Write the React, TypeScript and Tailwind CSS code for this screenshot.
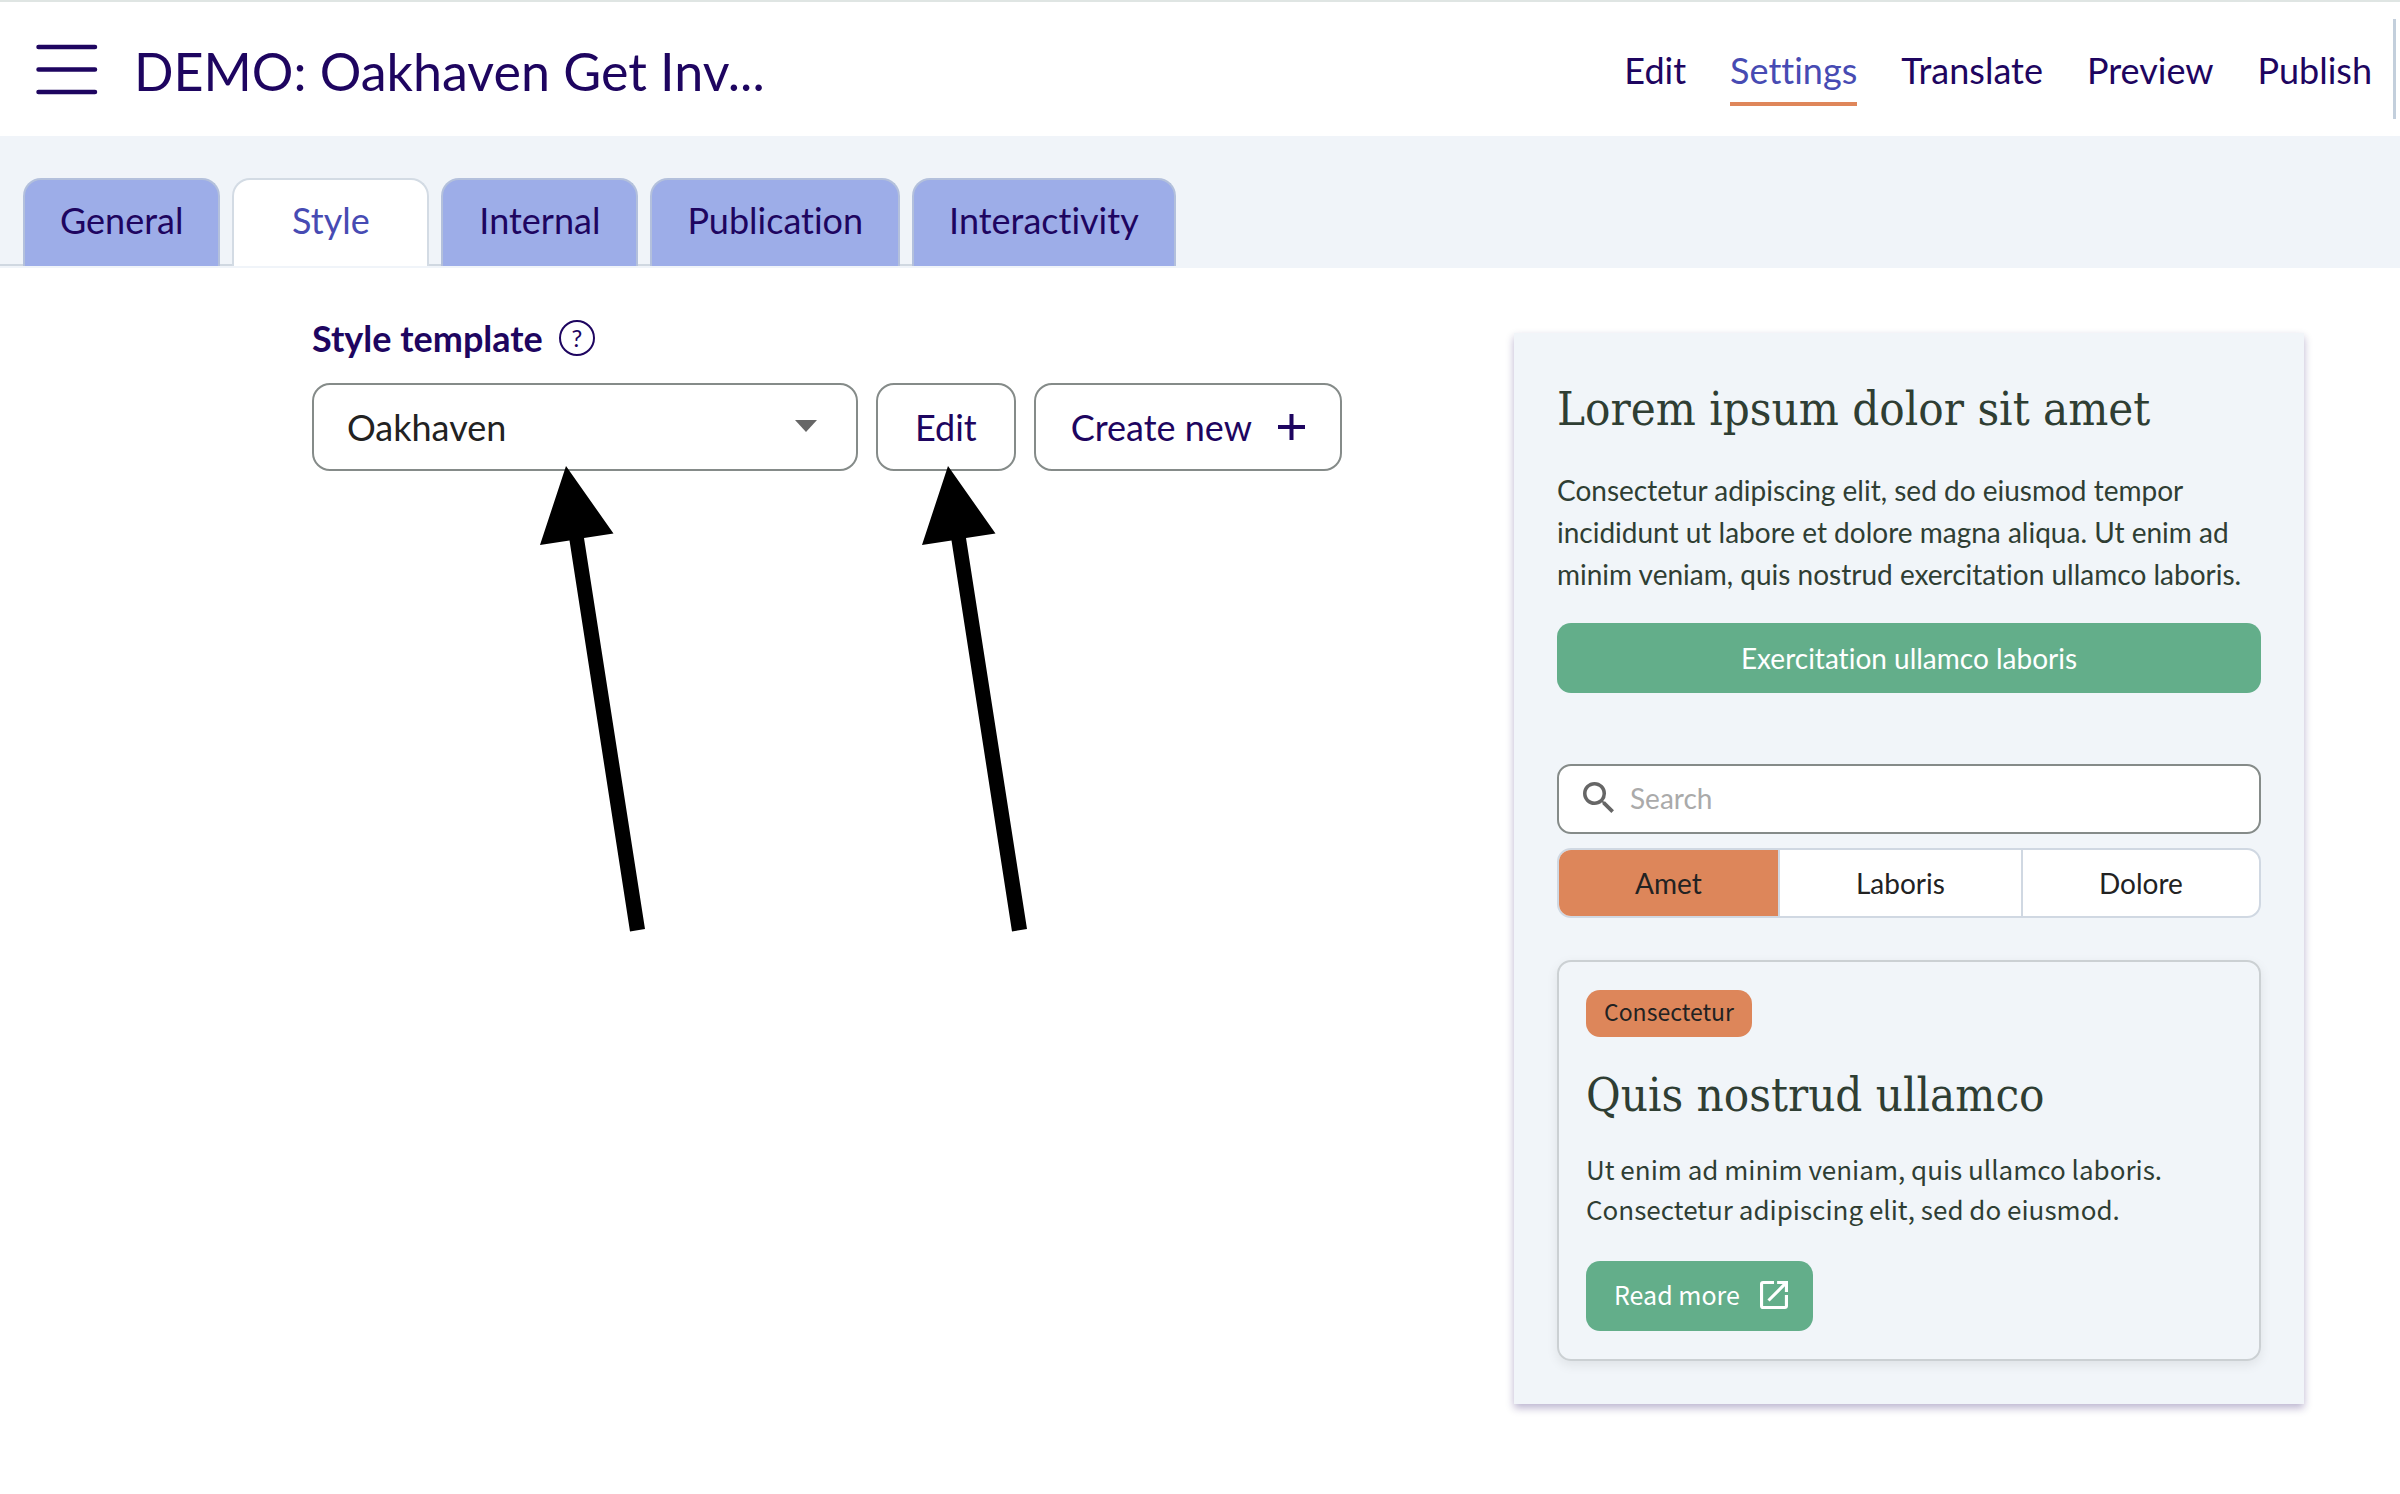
import React from "react";

const navItems = ["Edit", "Settings", "Translate", "Preview", "Publish"];
const tabs = ["General", "Style", "Internal", "Publication", "Interactivity"];

function PointerArrow() {
  return (
    <svg
      className="pointer-events-none absolute top-full left-1/2 -mt-[5px] -ml-6 h-[466px] w-[106px]"
      viewBox="0 0 106 466"
      aria-hidden="true"
    >
      <path d="M26 0 L73.5 67.5 L44 72 L105 463 L90 465.5 L29.5 74.5 L0 79 Z" fill="#000" />
    </svg>
  );
}

function Header() {
  return (
    <header className="flex h-[136px] items-center border-t-2 border-[#dfe5e3] bg-white pl-9">
      <button type="button" aria-label="Menu" className="shrink-0">
        <svg className="h-[52px] w-[62px]" viewBox="0 0 62 52" stroke="#1e0560" strokeWidth="4.5" strokeLinecap="round">
          <path d="M2.5 4H59M2.5 26.5H59M2.5 49H59" />
        </svg>
      </button>
      <h1 className="ml-9 grow truncate pt-1 text-[52px] leading-[72px]">DEMO: Oakhaven Get Inv...</h1>
      <nav className="mr-1 flex h-[100px] items-center gap-11 border-r-[3px] border-[#c3cfdc] pr-[21px]">
        {navItems.map((item) => (
          <a
            key={item}
            href="#"
            aria-current={item === "Settings" ? "page" : undefined}
            className={
              item === "Settings"
                ? "mt-1 border-b-4 border-[#df865a] pt-2 pb-1.5 leading-[52px] text-[#474bb3]"
                : "mt-1 border-b-4 border-transparent pt-2 pb-1.5 leading-[52px]"
            }
          >
            {item}
          </a>
        ))}
      </nav>
    </header>
  );
}

function Tabs() {
  return (
    <div className="flex bg-[#f0f4f9] pt-[42px] pb-[2px]">
      <div role="tablist" className="flex gap-3 bg-[linear-gradient(to_top,#d0d8e1_2px,transparent_2px)] pl-[23px]">
        {tabs.map((tab) => (
          <button
            key={tab}
            type="button"
            role="tab"
            aria-selected={tab === "Style"}
            className={
              tab === "Style"
                ? "h-[88px] min-w-[197px] rounded-t-[18px] border-2 border-b-0 border-[#d3dbe4] bg-white px-[35px] pb-1.5 text-[#474bb3]"
                : "h-[88px] min-w-[197px] rounded-t-[18px] border-2 border-b-0 border-[#b3c0dc] bg-[#9dade8] px-[35px] pb-1.5"
            }
          >
            {tab}
          </button>
        ))}
      </div>
    </div>
  );
}

function TemplatePicker() {
  return (
    <section>
      <div className="flex items-center gap-4">
        <label htmlFor="template" className="leading-[52px] font-bold">
          Style template
        </label>
        <button
          type="button"
          aria-label="Help"
          className="flex size-9 items-center justify-center rounded-full border-[2px] border-[#1e0560] text-[24px] leading-none"
        >
          ?
        </button>
      </div>
      <div className="mt-[19px] flex gap-[18px]">
        <div className="relative w-[546px]">
          <select
            id="template"
            defaultValue="Oakhaven"
            className="h-[88px] w-full appearance-none rounded-[18px] border-2 border-[#858b89] bg-white px-[33px] text-[#222]"
          >
            <option>Oakhaven</option>
          </select>
          <svg className="pointer-events-none absolute top-[37px] right-[41px] h-[12px] w-[22px]" viewBox="0 0 22 12" aria-hidden="true">
            <path d="M0 0H22L11 12Z" fill="#666" />
          </svg>
          <svg
            className="pointer-events-none absolute top-full left-[228px] -mt-[5px] h-[466px] w-[106px]"
            viewBox="0 0 106 466"
            aria-hidden="true"
          >
            <path d="M26 0 L73.5 67.5 L44 72 L105 463 L90 465.5 L29.5 74.5 L0 79 Z" fill="#000" />
          </svg>
        </div>
        <div className="relative">
          <button type="button" className="h-[88px] rounded-[18px] border-2 border-[#858b89] bg-white px-[37px]">
            Edit
          </button>
          <PointerArrow />
        </div>
        <button
          type="button"
          className="flex h-[88px] items-center gap-[26px] rounded-[18px] border-2 border-[#858b89] bg-white px-[35px]"
        >
          Create new
          <svg className="h-[27px] w-[27px]" viewBox="0 0 27 27" stroke="#1e0560" strokeWidth="4" aria-hidden="true">
            <path d="M0 13H27M13.5 0V26" />
          </svg>
        </button>
      </div>
    </section>
  );
}

function Preview() {
  return (
    <section className="mt-[65px] w-[790px] bg-[#f1f5f9] px-[43px] pt-[46px] pb-[43px] text-[28px] text-[#2f3e33] shadow-[0_4px_8px_rgba(30,5,96,0.3)]">
      <h2 className="font-['DejaVu_Serif_Condensed','DejaVu_Serif',serif] text-[47px] leading-[60px]">
        Lorem ipsum dolor sit amet
      </h2>
      <p className="mt-[30px] leading-[42px]">
        Consectetur adipiscing elit, sed do eiusmod tempor incididunt ut labore et dolore magna aliqua. Ut enim ad minim
        veniam, quis nostrud exercitation ullamco laboris.
      </p>
      <button type="button" className="mt-7 h-[70px] w-full rounded-[14px] bg-[#63ae8a] text-white">
        Exercitation ullamco laboris
      </button>
      <div className="mt-[71px] flex h-[70px] items-center rounded-[14px] border-2 border-[#858b89] bg-white pl-6">
        <svg className="-mt-1 h-[31px] w-[31px] shrink-0" viewBox="3 3 17.5 17.5" fill="#666" aria-hidden="true">
          <path d="M15.5 14h-.79l-.28-.27A6.471 6.471 0 0 0 16 9.5 6.5 6.5 0 1 0 9.5 16c1.61 0 3.09-.59 4.23-1.57l.27.28v.79l5 4.99L20.49 19l-4.99-5zm-6 0C7.01 14 5 11.99 5 9.5S7.01 5 9.5 5 14 7.01 14 9.5 11.99 14 9.5 14z" />
        </svg>
        <input
          type="search"
          aria-label="Search"
          placeholder="Search"
          className="ml-4 h-full min-w-0 grow bg-transparent pb-0.5 outline-none placeholder:text-[#aaa]"
        />
      </div>
      <div className="mt-[14px] flex h-[70px] overflow-hidden rounded-[14px] border-2 border-[#d0d8e2] bg-white text-[#222]">
        <button type="button" aria-pressed="true" className="grow bg-[#dd865a] px-4">
          Amet
        </button>
        <button type="button" aria-pressed="false" className="grow border-x-2 border-[#d0d8e2] px-4">
          Laboris
        </button>
        <button type="button" aria-pressed="false" className="grow px-4">
          Dolore
        </button>
      </div>
      <article className="mt-[42px] rounded-[14px] border-2 border-[#cbd0d3] px-[27px] py-7 font-['Noto_Sans_CJK_SC',sans-serif] text-[26px] shadow-[0_4px_12px_rgba(0,0,0,0.08)]">
        <span className="flex h-[47px] w-fit items-center rounded-[14px] bg-[#dd865a] px-[18px] pb-1 text-[23px] text-[#222]">
          Consectetur
        </span>
        <h3 className="mt-7 font-['DejaVu_Serif_Condensed','DejaVu_Serif',serif] text-[47px] leading-[60px]">
          Quis nostrud ullamco
        </h3>
        <p className="mt-6 leading-10">
          Ut enim ad minim veniam, quis ullamco laboris.
          <br />
          Consectetur adipiscing elit, sed do eiusmod.
        </p>
        <button
          type="button"
          className="mt-8 flex h-[70px] items-center gap-5 rounded-[14px] bg-[#63ae8a] pr-[25px] pb-0.5 pl-[28px] text-[25px] text-white"
        >
          Read more
          <svg className="size-[28px]" viewBox="3 3 18 18" fill="currentColor" aria-hidden="true">
            <path d="M19 19H5V5h7V3H5a2 2 0 0 0-2 2v14a2 2 0 0 0 2 2h14c1.1 0 2-.9 2-2v-7h-2v7zM14 3v2h3.59l-9.83 9.83 1.41 1.41L19 6.41V10h2V3h-7z" />
          </svg>
        </button>
      </article>
    </section>
  );
}

export default function App() {
  return (
    <div className="min-h-screen bg-white font-['Lato',sans-serif] text-[36px] text-[#1e0560] [font-variant-ligatures:none]">
      <Header />
      <Tabs />
      <main className="flex items-start justify-between pr-24 pl-[312px]">
        <div className="pt-11">
          <TemplatePicker />
        </div>
        <Preview />
      </main>
    </div>
  );
}
